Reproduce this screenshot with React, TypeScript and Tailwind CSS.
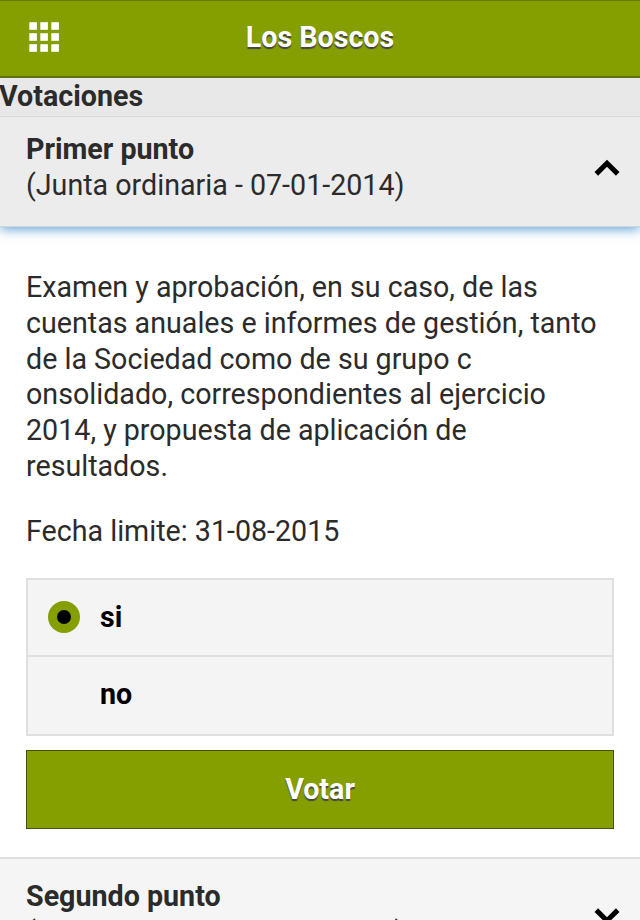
import React from "react";

const Chevron = ({ down = false }: { down?: boolean }) => (
  <svg className={`block h-[18px] w-[26px] shrink-0 ${down ? "mt-[6px] rotate-180" : "mt-[-7px]"}`} viewBox="0 0 26 18" fill="none">
    <path d="M2.3 14.9 13 4.3 23.7 14.9" stroke="#000" strokeWidth="5" />
  </svg>
);

const lines = [
  "Examen y aprobación, en su caso, de las",
  "cuentas anuales e informes de gestión, tanto",
  "de la Sociedad como de su grupo c",
  "onsolidado, correspondientes al ejercicio",
  "2014, y propuesta de aplicación de",
  "resultados.",
];

const offsets = [0, 11, 22];

export default function App() {
  return (
    <div className="h-[920px] w-[640px] overflow-hidden bg-white font-['Roboto',sans-serif] text-[28.65px] leading-[36px] text-[#2b2b2b]">
      <header className="grid h-[78px] grid-cols-[1fr_auto_1fr] items-center border-t border-b-2 border-t-[#657800] border-b-[#5f7012] bg-[#859e00]">
        <svg className="ml-[29px] mt-[-3px] block h-[30px] w-[30px]" viewBox="0 0 30 30" fill="#fff">
          {offsets.map((y) => offsets.map((x) => <rect key={`${x}-${y}`} x={x + 0.3} y={y + 0.2} width="7.6" height="7.6" />))}
        </svg>
        <h1 className="mt-[-3px] font-bold text-white [text-shadow:0_2px_1px_#444]">Los Boscos</h1>
      </header>
      <h2 className="relative z-10 h-[38px] bg-[#e8e8e8] font-bold -indent-px">Votaciones</h2>
      <section className="flex h-[111px] items-center justify-between border-y border-t-[#d9d9d9] border-b-[#d3d6d9] bg-[#ececec] pl-[26px] pr-5 shadow-[0_2px_11px_#3388ccd0]">
        <div className="mt-[-9px]">
          <h3 className="font-bold">Primer punto</h3>
          <p>(Junta ordinaria - 07-01-2014)</p>
        </div>
        <Chevron />
      </section>
      <main className="px-[26px] pt-[43px]">
        <div className="leading-[35.8px]">
          {lines.map((line) => (
            <p key={line} className="whitespace-nowrap">{line}</p>
          ))}
        </div>
        <p className="mt-[28px]">Fecha limite: 31-08-2015</p>
        <div className="mt-[29px] h-[158px] w-[588px] border-2 border-[#dfdfdf] bg-[#f4f4f4] font-bold text-black">
          <div className="flex h-[77px] items-center border-b-2 border-[#dfdfdf] pl-5">
            <span className="flex size-8 items-center justify-center rounded-full bg-[#859e00]">
              <span className="size-[14px] rounded-full bg-black" />
            </span>
            <span className="ml-5">si</span>
          </div>
          <div className="flex h-[74px] items-center pl-[72px]">no</div>
        </div>
        <button className="mt-[14px] block h-[79px] w-[588px] border border-[#465016] bg-[#859e00] text-center font-bold text-white [text-shadow:0_2px_1px_#444]">
          Votar
        </button>
      </main>
      <section className="mt-[28px] flex h-[111px] items-center justify-between border-t-2 border-[#dfdfdf] bg-[#f5f5f5] pl-[26px] pr-5">
        <div className="mt-[2px]">
          <h3 className="font-bold">Segundo punto</h3>
          <p>(Junta ordinaria - 07-01-2014)</p>
        </div>
        <Chevron down />
      </section>
    </div>
  );
}
